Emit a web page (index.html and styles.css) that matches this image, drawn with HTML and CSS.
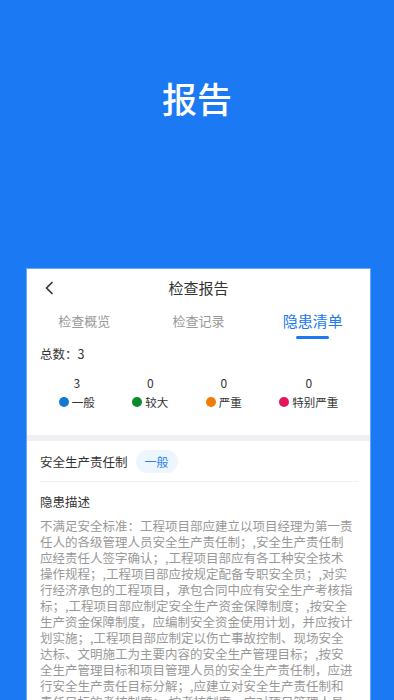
FILE: index.html
```html
<!DOCTYPE html>
<html lang="zh-CN">
<head>
<meta charset="utf-8">
<title>报告</title>
<link rel="stylesheet" href="styles.css">
</head>
<body>
<div class="page">
  <header class="hero">
    <h1 class="hero-title">报告</h1>
  </header>
  <main class="card">
    <div class="nav">
      <svg class="back" width="10" height="14" viewBox="0 0 10 14"><polyline points="8,1.5 2.5,7 8,12.5" fill="none" stroke="#333" stroke-width="1.7" stroke-linecap="round" stroke-linejoin="round"/></svg>
      <div class="nav-title">检查报告</div>
    </div>
    <div class="tabs">
      <div class="tab">检查概览</div>
      <div class="tab">检查记录</div>
      <div class="tab active">隐患清单<span class="bar"></span></div>
    </div>
    <div class="summary">
      <div class="total">总数：3</div>
      <div class="stats">
        <div class="stat"><div class="num">3</div><div class="lg"><span class="dot d1"></span>一般</div></div>
        <div class="stat"><div class="num">0</div><div class="lg"><span class="dot d2"></span>较大</div></div>
        <div class="stat"><div class="num">0</div><div class="lg"><span class="dot d3"></span>严重</div></div>
        <div class="stat"><div class="num">0</div><div class="lg"><span class="dot d4"></span>特别严重</div></div>
      </div>
    </div>
    <div class="sep"></div>
    <div class="item">
      <div class="item-head">
        <span class="item-title">安全生产责任制</span>
        <span class="badge">一般</span>
      </div>
      <div class="desc">
        <div class="desc-label">隐患描述</div>
        <p class="desc-text">不满足安全标准：工程项目部应建立以项目经理为第一责任人的各级管理人员安全生产责任制；,安全生产责任制应经责任人签字确认；,工程项目部应有各工种安全技术操作规程；,工程项目部应按规定配备专职安全员；,对实行经济承包的工程项目，承包合同中应有安全生产考核指标；,工程项目部应制定安全生产资金保障制度；,按安全生产资金保障制度，应编制安全资金使用计划，并应按计划实施；,工程项目部应制定以伤亡事故控制、现场安全达标、文明施工为主要内容的安全生产管理目标；,按安全生产管理目标和项目管理人员的安全生产责任制，应进行安全生产责任目标分解；,应建立对安全生产责任制和责任目标的考核制度；,按考核制度，应对项目管理人员定期进行考核。</p>
      </div>
    </div>
  </main>
</div>
</body>
</html>
```

FILE: styles.css
```css
* { box-sizing: border-box; }
html, body { margin: 0; padding: 0; }
body {
  background: #1a79f3;
  font-family: "Noto Sans CJK SC", "Noto Sans", sans-serif;
  color: #333;
  height: 700px;
  overflow: hidden;
}
.page { display: flex; flex-direction: column; }
.hero {
  height: 268px;
  padding-top: 76px;
  display: flex;
  justify-content: center;
}
.hero-title {
  margin: 0;
  font-size: 35px;
  line-height: 44px;
  font-weight: 500;
  color: #fff;
}
.card {
  margin-left: 26px;
  width: 345px;
  background: #fff;
  border: 1px solid #6aa8f7;
  border-bottom: none;
  min-height: 600px;
}
.nav {
  height: 38px;
  display: flex;
  align-items: center;
  justify-content: center;
  position: relative;
}
.back { position: absolute; left: 17px; top: 12px; }
.nav-title { font-size: 15px; line-height: 20px; color: #333; }
.tabs { display: flex; height: 33px; }
.tab {
  flex: 1;
  display: flex;
  flex-direction: column;
  align-items: center;
  padding-top: 3px;
  font-size: 13px;
  line-height: 22px;
  color: #999;
}
.tab.active { color: #1a79f3; font-size: 15px; }
.bar {
  margin-top: 4px;
  width: 33px;
  height: 3px;
  border-radius: 2px;
  background: #1a79f3;
}
.summary { padding: 5px 13px 0; height: 95px; }
.total { font-size: 12.5px; line-height: 18px; color: #333; }
.stats {
  display: flex;
  justify-content: space-around;
  margin-top: 12px;
}
.stat { display: flex; flex-direction: column; align-items: center; gap: 3px; }
.num { font-size: 12px; line-height: 16px; color: #333; }
.lg { display: flex; align-items: center; gap: 3px; font-size: 11.5px; line-height: 16px; color: #333; }
.dot { width: 10px; height: 10px; border-radius: 50%; display: inline-block; }
.d1 { background: #1677d2; }
.d2 { background: #0a8c2c; }
.d3 { background: #f27b0c; }
.d4 { background: #e5155c; }
.sep { height: 6px; background: #efeff4; }
.item { padding: 0 12px 0 13px; }
.item-head {
  display: flex;
  align-items: center;
  gap: 8px;
  padding: 9px 0 8px;
  border-bottom: 1px solid #f0f0f0;
}
.item-title { font-size: 12.5px; line-height: 20px; color: #333; }
.badge {
  height: 23px;
  padding: 0 9px;
  border-radius: 12px;
  background: #edf6ff;
  color: #2a82e6;
  font-size: 12px;
  line-height: 23px;
}
.desc { padding-top: 10px; }
.desc-label { font-size: 12.5px; line-height: 20px; color: #333; }
.desc-text {
  margin: 6px 0 0;
  padding-right: 4px;
  font-size: 12.5px;
  line-height: 16px;
  color: #999;
}
```
